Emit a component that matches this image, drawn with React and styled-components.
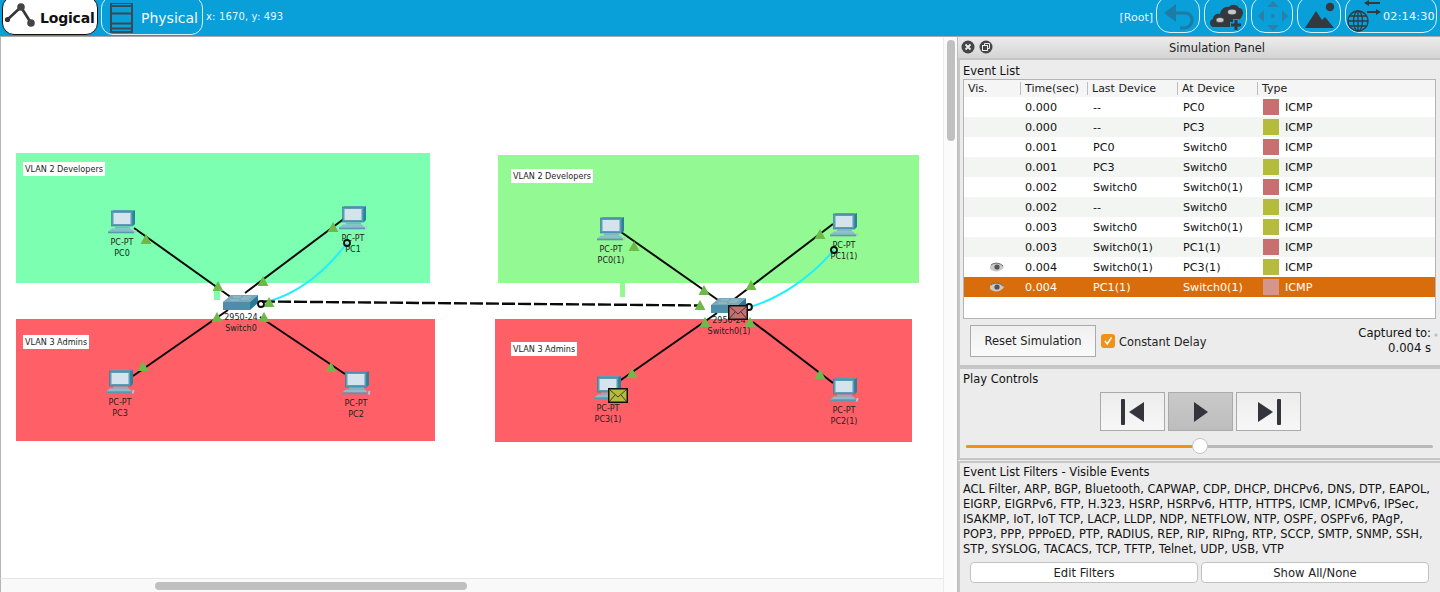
import React from "react";
import styled, { createGlobalStyle } from "styled-components";

const Global = createGlobalStyle`
  html, body { margin: 0; padding: 0; background: #fff; overflow: hidden; }
  body { font-family: "DejaVu Sans", "Liberation Sans", sans-serif; font-size: 11px; color: #111; }
`;

const Page = styled.div`
  width: 1440px; height: 592px; display: flex; flex-direction: column; overflow: hidden;
`;
const Toolbar = styled.header`
  height: 36px; flex: none; background: #099fd9; display: flex; align-items: flex-start;
  border-bottom: 1px solid #a9a9a9; overflow: hidden; color: #fff; box-sizing: content-box;
`;
const ModeTab = styled.div`
  height: 39px; margin: -4px 0 0 ${p => p.$ml}px; width: ${p => p.$w}px; box-sizing: border-box;
  border-radius: 12px; display: flex; align-items: center; padding: 4px 0 0 ${p => p.$pl}px; gap: ${p => p.$gap}px;
  font-size: 14px; letter-spacing: ${p => (p.$active ? "-0.2px" : "0")};
  background: ${p => (p.$active ? "#fff" : "transparent")};
  border: 1px solid ${p => (p.$active ? "#111" : "#d8f0fa")};
  color: ${p => (p.$active ? "#111" : "#f2fbff")};
  font-weight: ${p => (p.$active ? 700 : 400)};
`;
const Coord = styled.span`
  font-size: 10px; margin: 11px 0 0 3px; color: #eaf8fe; letter-spacing: .15px; white-space: nowrap;
`;
const Spacer = styled.div`flex: 1;`;
const RootLabel = styled.span`font-size: 11px; margin: 11px 3px 0 0; color: #e6f6fd;`;
const ToolButton = styled.div`
  width: ${p => p.$w}px; height: 37px; margin: -4px ${p => p.$mr || 0}px 0 ${p => p.$ml || 0}px; box-sizing: border-box;
  border: 1px solid #d8f0fa; border-radius: 14px; display: flex; align-items: center;
  padding: 3px 0 0 ${p => p.$pl || 0}px; flex: none;
`;
const Clock = styled.span`font-size: 11.2px; margin-left: 1px; letter-spacing: .2px; color: #f2fbff;`;

const Main = styled.div`flex: 1; display: flex; min-height: 0;`;
const Workspace = styled.div`
  width: 957px; flex: none; display: grid; grid-template-columns: 943px 14px; grid-template-rows: 541px 14px;
`;
const Canvas = styled.div`
  position: relative; overflow: hidden; background: #fff; border-left: 1px solid #b5b5b5; box-sizing: border-box;
`;
const Layer = styled.svg`
  position: absolute; left: -1px; top: 0; width: 943px; height: 541px; overflow: visible; pointer-events: none;
`;
const Zone = styled.div`
  position: absolute; left: ${p => p.$x - 1}px; top: ${p => p.$y - 37}px; width: ${p => p.$w}px; height: ${p => p.$h}px;
  background: ${p => p.$c};
`;
const ZoneLabel = styled.span`
  position: absolute; left: ${p => p.$x - 1}px; top: ${p => p.$y - 37}px; height: 14px; line-height: 14px; padding: 0 2px;
  background: #fff; font-size: 8.1px; color: #222; white-space: nowrap;
`;
const Node = styled.div`
  position: absolute; left: ${p => p.$x - 41}px; top: ${p => p.$y - 37}px; width: 80px;
  display: flex; flex-direction: column; align-items: center; font-size: 8px; color: #222; line-height: 11px; white-space: nowrap;
`;
const NodeIcon = styled.svg`display: block; margin-bottom: ${p => p.$mb || 0}px;`;
const VTrack = styled.div`background: #fbfbfb; border-left: 1px solid #ececec; position: relative; display: flex; justify-content: center; padding-top: 3px;`;
const VThumb = styled.div`width: 8px; height: 101px; border-radius: 4px; background: #c0c0c0;`;
const HTrack = styled.div`background: #f9f9f9; border-top: 1px solid #e6e6e6; border-left: 1px solid #b5b5b5; padding: 3px 0 0 154px; height: 14px; box-sizing: border-box;`;
const HThumb = styled.div`width: 312px; height: 8px; border-radius: 4px; background: #c0c0c0;`;
const Corner = styled.div`background: #fbfbfb; border-left: 1px solid #ececec;`;

const Panel = styled.aside`
  flex: 1; background: #ececec; display: flex; flex-direction: column; border-left: 1px solid #bdbdbd; box-sizing: border-box; min-width: 0;
`;
const TitleBar = styled.div`
  height: 21px; flex: none; background: linear-gradient(#ececec, #d4d4d4); position: relative; display: flex; align-items: center; justify-content: center;
  font-size: 11.5px; color: #222; padding-left: 36px; box-sizing: border-box;
`;
const WinButtons = styled.div`position: absolute; left: 3px; top: 3px; display: flex; gap: 4px;`;
const Section = styled.section`
  border: 2px solid #c6c6c6; border-right: 0; border-bottom-width: ${p => (p.$open ? 0 : 2)}px;
  box-sizing: border-box; height: ${p => p.$h}px; flex: none; padding: 0 0 0 3px; margin-bottom: ${p => p.$mb || 0}px; position: relative;
`;
const SectionTitle = styled.div`font-size: 11.5px; line-height: 14px; padding-top: ${p => p.$pt ?? 3}px; color: #111;`;
const Table = styled.div`
  width: 473px; height: 240px; margin-top: 1px; background: #fff; border: 1px solid #b4b4b4; box-sizing: border-box; font-size: 11.2px;
`;
const columns = "56px 67px 90px 80px 1fr";
const HeadRow = styled.div`
  display: grid; grid-template-columns: ${columns}; height: 17px; background: #f5f5f5; align-items: center; color: #222; font-size: 11px;
`;
const HeadCell = styled.div`
  height: 13px; line-height: 13px; padding-left: 4px; border-left: ${p => (p.$first ? 0 : "1px solid #bdbdbd")}; white-space: nowrap;
`;
const Row = styled.div`
  display: grid; grid-template-columns: ${columns}; height: 20px; align-items: center; white-space: nowrap;
  background: ${p => (p.$sel ? "#da6d0b" : p.$alt ? "#f2f5f2" : "#fff")};
  color: ${p => (p.$sel ? "#fff" : "#111")};
`;
const Cell = styled.div`padding-left: ${p => p.$pl ?? 6}px; display: flex; align-items: center; gap: 6px; height: 20px;`;
const Swatch = styled.span`width: 16px; height: 16px; background: ${p => p.$c}; flex: none;`;
const ControlRow = styled.div`display: flex; position: relative; padding: 6px 0 0 7px; align-items: flex-start;`;
const ResetButton = styled.div`
  width: 126px; height: 32px; box-sizing: border-box; border: 1px solid #aaa; background: linear-gradient(#f0f0f0, #fafafa);
  display: flex; align-items: center; justify-content: center; font-size: 11.5px; color: #222;
`;
const CheckBox = styled.span`
  width: 14px; height: 14px; border-radius: 3px; background: #f0921a; margin: 9px 4px 0 5px; display: flex; align-items: center; justify-content: center; flex: none;
`;
const CheckLabel = styled.span`font-size: 11.4px; margin-top: 10px; color: #222;`;
const Captured = styled.div`
  margin-left: auto; margin-right: 9px; text-align: right; font-size: 11.6px; line-height: 15px; padding-top: 1px; color: #111; position: relative;
`;
const Star = styled.span`position: absolute; right: -7px; top: 5px; color: #aaa; font-size: 8px;`;
const Transport = styled.div`display: flex; justify-content: flex-start; gap: 3px; padding: 6px 0 0 137px;`;
const TransportButton = styled.div`
  width: 65px; height: 39px; box-sizing: border-box; border: 1px solid #aaa; display: flex; align-items: center; justify-content: center;
  background: ${p => (p.$on ? "linear-gradient(#c9c9c9, #bdbdbd)" : "linear-gradient(#ececec, #f7f7f7)")};
`;
const Slider = styled.div`height: 3px; width: 467px; margin: 14px 0 0 3px; background: #b9b9b9; position: relative; border-radius: 2px;`;
const SliderFill = styled.div`height: 3px; background: #f0920f; border-radius: 2px;`;
const SliderKnob = styled.div`
  position: absolute; top: -7px; margin-left: -8px; width: 16px; height: 16px; border-radius: 50%; background: #fff; border: 1px solid #c4c4c4; box-sizing: border-box;
`;
const FilterText = styled.div`font-size: 11.45px; line-height: 15px; margin-top: 3px; color: #111; white-space: nowrap;`;
const FilterButtons = styled.div`display: flex; gap: 3px; margin: 5px 0 0 7px;`;
const FilterButton = styled.div`
  width: 228px; height: 21px; box-sizing: border-box; background: #fff; border: 1px solid #c2c2c2; border-radius: 4px;
  display: flex; align-items: center; justify-content: center; font-size: 11.6px; color: #222;
`;

const PcIcon = () => (
  <NodeIcon $mb={2} width="30" height="25" viewBox="0 0 30 25">
    <path d="M5 1l2-1h20l-2 1z" fill="#6fa9bf" />
    <rect x="4.5" y="1" width="21" height="15" fill="#5b9cb6" stroke="#2f7a97" strokeWidth=".6" />
    <path d="M25.5 1L28 0v14l-2.5 2.5z" fill="#2c7f9f" />
    <rect x="6.5" y="3" width="17" height="11" fill="#d5e4ec" />
    <path d="M8 16.5h15v2H8z" fill="#7fb3c7" />
    <path d="M5 18.5h19l3 3H1z" fill="#8cbccd" />
    <path d="M1 21.5h26v1.8H1z" fill="#5b97ae" />
    <path d="M27.5 20h2l-.8 3.6h-2z" fill="#a9cbd8" />
  </NodeIcon>
);
const SwitchIcon = () => (
  <NodeIcon $mb={1} width="36" height="17" viewBox="0 0 36 17">
    <path d="M8 1h27l-8 7H0z" fill="#78a8ba" />
    <path d="M10 3h8M20 3h8M7 6h9M18 5h8" stroke="#b6d0da" strokeWidth=".7" />
    <rect x="0" y="8" width="27" height="8" fill="#4f8ea8" />
    <path d="M27 8l8-7v8l-8 7z" fill="#2a7896" />
  </NodeIcon>
);
const Envelope = styled.svg`position: absolute; left: ${p => p.$x - 1}px; top: ${p => p.$y - 37}px;`;
const Mail = ({ x, y, c }) => (
  <Envelope $x={x} $y={y} width="20" height="15" viewBox="0 0 20 15">
    <rect x=".75" y=".75" width="18.5" height="13.5" fill={c} stroke="#111" strokeWidth="1.5" />
    <path d="M1 1l9 8 9-8M1 14l6-7M19 14l-6-7" fill="none" stroke="#222" strokeWidth=".8" />
  </Envelope>
);

const lines = [
  [134, 228, 232, 298], [345, 218, 245, 293], [133, 376, 228, 310], [260, 317, 345, 374],
  [621, 232, 718, 300], [833, 224, 733, 300], [618, 382, 717, 313], [753, 322, 833, 383],
];
const triangles = [
  [146, 239], [333, 227], [218, 286], [263, 281], [269, 302], [217, 317], [264, 317], [143, 366], [331, 367],
  [634, 246], [820, 234], [704, 290], [751, 285], [700, 305], [705, 322], [750, 322], [632, 373], [820, 374],
];
const pcs = [
  ["PC0", 122, 210], ["PC1", 353, 206], ["PC3", 120, 370], ["PC2", 356, 371],
  ["PC0(1)", 611, 217], ["PC1(1)", 844, 213], ["PC3(1)", 608, 376], ["PC2(1)", 844, 378],
];
const rows = [
  ["0.000", "--", "PC0", "#c87070"], ["0.000", "--", "PC3", "#b5bb3c"],
  ["0.001", "PC0", "Switch0", "#c87070"], ["0.001", "PC3", "Switch0", "#b5bb3c"],
  ["0.002", "Switch0", "Switch0(1)", "#c87070"], ["0.002", "--", "Switch0", "#b5bb3c"],
  ["0.003", "Switch0", "Switch0(1)", "#b5bb3c"], ["0.003", "Switch0(1)", "PC1(1)", "#c87070"],
  ["0.004", "Switch0(1)", "PC3(1)", "#b5bb3c", true], ["0.004", "PC1(1)", "Switch0(1)", "#d4958c", true, true],
];
const filters = [
  "ACL Filter, ARP, BGP, Bluetooth, CAPWAP, CDP, DHCP, DHCPv6, DNS, DTP, EAPOL,",
  "EIGRP, EIGRPv6, FTP, H.323, HSRP, HSRPv6, HTTP, HTTPS, ICMP, ICMPv6, IPSec,",
  "ISAKMP, IoT, IoT TCP, LACP, LLDP, NDP, NETFLOW, NTP, OSPF, OSPFv6, PAgP,",
  "POP3, PPP, PPPoED, PTP, RADIUS, REP, RIP, RIPng, RTP, SCCP, SMTP, SNMP, SSH,",
  "STP, SYSLOG, TACACS, TCP, TFTP, Telnet, UDP, USB, VTP",
];

const Eye = () => (
  <svg width="16" height="11" viewBox="0 0 16 11">
    <path d="M1 4C4 0 11 0 15 5c-3 5-10 6-14 2z" fill="#c9c9c9" />
    <path d="M2 3C6 0 11 1 14 4" stroke="#666" fill="none" />
    <circle cx="8" cy="5" r="2.6" fill="#555" />
  </svg>
);

export default function App() {
  return (
    <Page>
      <Global />
      <Toolbar>
        <ModeTab $active $ml={2} $w={96} $pl={2} $gap={5}>
          <svg width="30" height="28" viewBox="0 0 30 28" style={{ overflow: "visible", flex: "none" }}>
            <path d="M2 16L16 3l10 16" fill="none" stroke="#333" strokeWidth="2.6" />
            <circle cx="2.5" cy="15.5" r="2.6" fill="#333" /><circle cx="16" cy="3" r="3.8" fill="#444" /><circle cx="26" cy="19" r="3.8" fill="#444" />
          </svg>
          Logical
        </ModeTab>
        <ModeTab $ml={3} $w={102} $pl={7} $gap={8}>
          <svg width="24" height="30" viewBox="0 0 24 30" style={{ flex: "none" }}>
            <rect x="2" y="0" width="21" height="29" fill="none" stroke="#3a4a55" strokeWidth="2" />
            <path d="M2 3h21M2 10.5h21M2 20.5h21M2 25.5h21" stroke="#3a4a55" strokeWidth="2" />
          </svg>
          Physical
        </ModeTab>
        <Coord>x: 1670, y: 493</Coord>
        <Spacer />
        <RootLabel>[Root]</RootLabel>
        <ToolButton $w={44} $pl={6}>
          <svg width="32" height="30" viewBox="0 0 32 30">
            <path d="M10 12h12c5 0 7 4 7 7 0 5-4 8-8 8h-4" fill="none" stroke="#1b7da6" strokeWidth="3.2" />
            <path d="M13 3L1 12l12 9z" fill="#1b7da6" />
          </svg>
        </ToolButton>
        <ToolButton $w={43} $ml={4} $pl={4}>
          <svg width="36" height="32" viewBox="0 0 36 32">
            <path d="M4 27c-4-1-4-7 0-8 0-4 4-6 7-5 1-5 5-8 9-7 2-3 8-3 10 1 4 0 5 5 3 8-1 3-3 4-6 4l-4 7z" fill="#33393e" />
            <ellipse cx="11" cy="20" rx="4" ry="2.6" fill="#c9c9c9" stroke="#33393e" strokeWidth=".6" /><ellipse cx="23" cy="12" rx="4.4" ry="2.8" fill="#c9c9c9" stroke="#33393e" strokeWidth=".6" />
            <path d="M21 25h12M27 19v12" stroke="#099fd9" strokeWidth="6" />
            <path d="M22 25h10M27 20v10" stroke="#33393e" strokeWidth="3" />
          </svg>
        </ToolButton>
        <ToolButton $w={42} $ml={4} $pl={5}>
          <svg width="32" height="32" viewBox="0 0 32 32" fill="#2a80a8">
            <path d="M16 1l6 6H10zM16 31l-6-6h12zM1 16l6-6v12zM31 16l-6-6v12z" />
            <circle cx="16" cy="16" r="2" />
          </svg>
        </ToolButton>
        <ToolButton $w={44} $ml={4} $pl={7}>
          <svg width="30" height="28" viewBox="0 0 30 28" fill="#33393e">
            <circle cx="25" cy="5" r="4.2" />
            <path d="M0 26L11 9l6 9 3-3 9 11z" />
          </svg>
        </ToolButton>
        <ToolButton $w={92} $ml={4} $mr={3} $pl={1}>
          <svg width="35" height="33" viewBox="0 0 35 33" style={{ flex: "none", overflow: "visible" }}>
            <g fill="none" stroke="#33393e" strokeWidth="1.3">
              <circle cx="11" cy="21" r="10" /><ellipse cx="11" cy="21" rx="4.5" ry="10" />
              <path d="M1 21h20M2.5 16h17M2.5 26h17M11 11v20" />
            </g>
            <path d="M19 3h14M20 12h12" stroke="#33393e" strokeWidth="1.8" />
            <path d="M22 0l-5 3 5 3zM29 9l5 3-5 3z" fill="#33393e" />
          </svg>
          <Clock>02:14:30</Clock>
        </ToolButton>
      </Toolbar>
      <Main>
        <Workspace>
          <Canvas>
            <Zone $x={16} $y={153} $w={414} $h={130} $c="#7cffb0" />
            <Zone $x={498} $y={155} $w={421} $h={128} $c="#93f993" />
            <Zone $x={16} $y={319} $w={419} $h={122} $c="#ff5f67" />
            <Zone $x={495} $y={319} $w={417} $h={123} $c="#ff5f67" />
            <Zone $x={214} $y={283} $w={6} $h={17} $c="#7cffb0" />
            <Zone $x={620} $y={283} $w={5} $h={14} $c="#93f993" />
            <ZoneLabel $x={23} $y={162}>VLAN 2 Developers</ZoneLabel>
            <ZoneLabel $x={511} $y={169}>VLAN 2 Developers</ZoneLabel>
            <ZoneLabel $x={23} $y={335}>VLAN 3 Admins</ZoneLabel>
            <ZoneLabel $x={511} $y={342}>VLAN 3 Admins</ZoneLabel>
            <Layer viewBox="0 37 943 541">
              {lines.map((l, i) => <line key={i} x1={l[0]} y1={l[1]} x2={l[2]} y2={l[3]} stroke="#0a0a0a" strokeWidth="2" />)}
              <path d="M347 243C325 272 300 292 270 301" fill="none" stroke="#1ff0ff" strokeWidth="2" />
              <path d="M834 250C810 278 780 298 750 307" fill="none" stroke="#1ff0ff" strokeWidth="2" />
              <path d="M262 301.5L702 305.5" stroke="#0a0a0a" strokeWidth="2.4" strokeDasharray="13 3" fill="none" />
            </Layer>
            {pcs.map(([n, x, y]) => (
              <Node key={n} $x={x} $y={y}>
                <PcIcon />
                <span>PC-PT</span>
                <span>{n}</span>
              </Node>
            ))}
            <Node $x={241} $y={294}><SwitchIcon /><span>2950-24</span><span>Switch0</span></Node>
            <Node $x={729} $y={297}><SwitchIcon /><span>2950-24</span><span>Switch0(1)</span></Node>
            <Layer viewBox="0 37 943 541">
              {triangles.map(([x, y], i) => <polygon key={i} points={`${x},${y - 5} ${x + 5.5},${y + 5} ${x - 5.5},${y + 5}`} fill="#6fb84a" />)}
              {[[347, 243], [261, 304], [834, 250], [749, 307]].map(([x, y], i) => <circle key={i} cx={x} cy={y} r="3" fill="none" stroke="#0a0a0a" strokeWidth="1.8" />)}
            </Layer>
            <Mail x={728} y={305} c="#c87070" />
            <Mail x={608} y={388} c="#b5bb3c" />
          </Canvas>
          <VTrack><VThumb /></VTrack>
          <HTrack><HThumb /></HTrack>
          <Corner />
        </Workspace>
        <Panel>
          <TitleBar>
            <WinButtons>
              <svg width="14" height="14" viewBox="0 0 14 14"><circle cx="7" cy="7" r="6.5" fill="#454545" /><path d="M4.5 4.5l5 5M9.5 4.5l-5 5" stroke="#eee" strokeWidth="1.8" /></svg>
              <svg width="14" height="14" viewBox="0 0 14 14"><circle cx="7" cy="7" r="6.5" fill="#454545" /><rect x="3.5" y="5.5" width="5" height="5" fill="none" stroke="#eee" /><path d="M5.5 5V3.5h5v5H9" fill="none" stroke="#eee" /></svg>
            </WinButtons>
            Simulation Panel
          </TitleBar>
          <Section $h={309}>
            <SectionTitle $pt={4}>Event List</SectionTitle>
            <Table>
              <HeadRow>
                <HeadCell $first>Vis.</HeadCell><HeadCell>Time(sec)</HeadCell><HeadCell>Last Device</HeadCell><HeadCell>At Device</HeadCell><HeadCell>Type</HeadCell>
              </HeadRow>
              {rows.map((r, i) => (
                <Row key={i} $alt={i % 2 === 1} $sel={r[5]}>
                  <Cell $pl={25}>{r[4] && <Eye />}</Cell>
                  <Cell $pl={5}>{r[0]}</Cell><Cell>{r[1]}</Cell><Cell>{r[2]}</Cell>
                  <Cell><Swatch $c={r[3]} />ICMP</Cell>
                </Row>
              ))}
            </Table>
            <ControlRow>
              <ResetButton>Reset Simulation</ResetButton>
              <CheckBox><svg width="10" height="10" viewBox="0 0 10 10"><path d="M2 5l2.2 3L8.5 1.5" fill="none" stroke="#fff" strokeWidth="1.4" /></svg></CheckBox>
              <CheckLabel>Constant Delay</CheckLabel>
              <Captured>Captured to:<br />0.004 s<Star>*</Star></Captured>
            </ControlRow>
          </Section>
          <Section $h={93} $mb={1}>
            <SectionTitle>Play Controls</SectionTitle>
            <Transport>
              <TransportButton>
                <svg width="24" height="28" viewBox="0 0 24 28" fill="#33343c"><rect x="0" y="1" width="4" height="26" rx="1" /><path d="M23 4v20L8 14z" /></svg>
              </TransportButton>
              <TransportButton $on>
                <svg width="16" height="22" viewBox="0 0 16 22" fill="#33343c"><path d="M1 1v20l14-10z" /></svg>
              </TransportButton>
              <TransportButton>
                <svg width="24" height="28" viewBox="0 0 24 28" fill="#33343c"><rect x="20" y="1" width="4" height="26" rx="1" /><path d="M1 4v20l15-10z" /></svg>
              </TransportButton>
            </Transport>
            <Slider>
              <SliderFill style={{ width: "50%" }} />
              <SliderKnob style={{ left: "50%" }} />
            </Slider>
          </Section>
          <Section $h={131} $open>
            <SectionTitle $pt={2}>Event List Filters - Visible Events</SectionTitle>
            <FilterText>{filters.map(f => <div key={f}>{f}</div>)}</FilterText>
            <FilterButtons>
              <FilterButton>Edit Filters</FilterButton>
              <FilterButton>Show All/None</FilterButton>
            </FilterButtons>
          </Section>
        </Panel>
      </Main>
    </Page>
  );
}
